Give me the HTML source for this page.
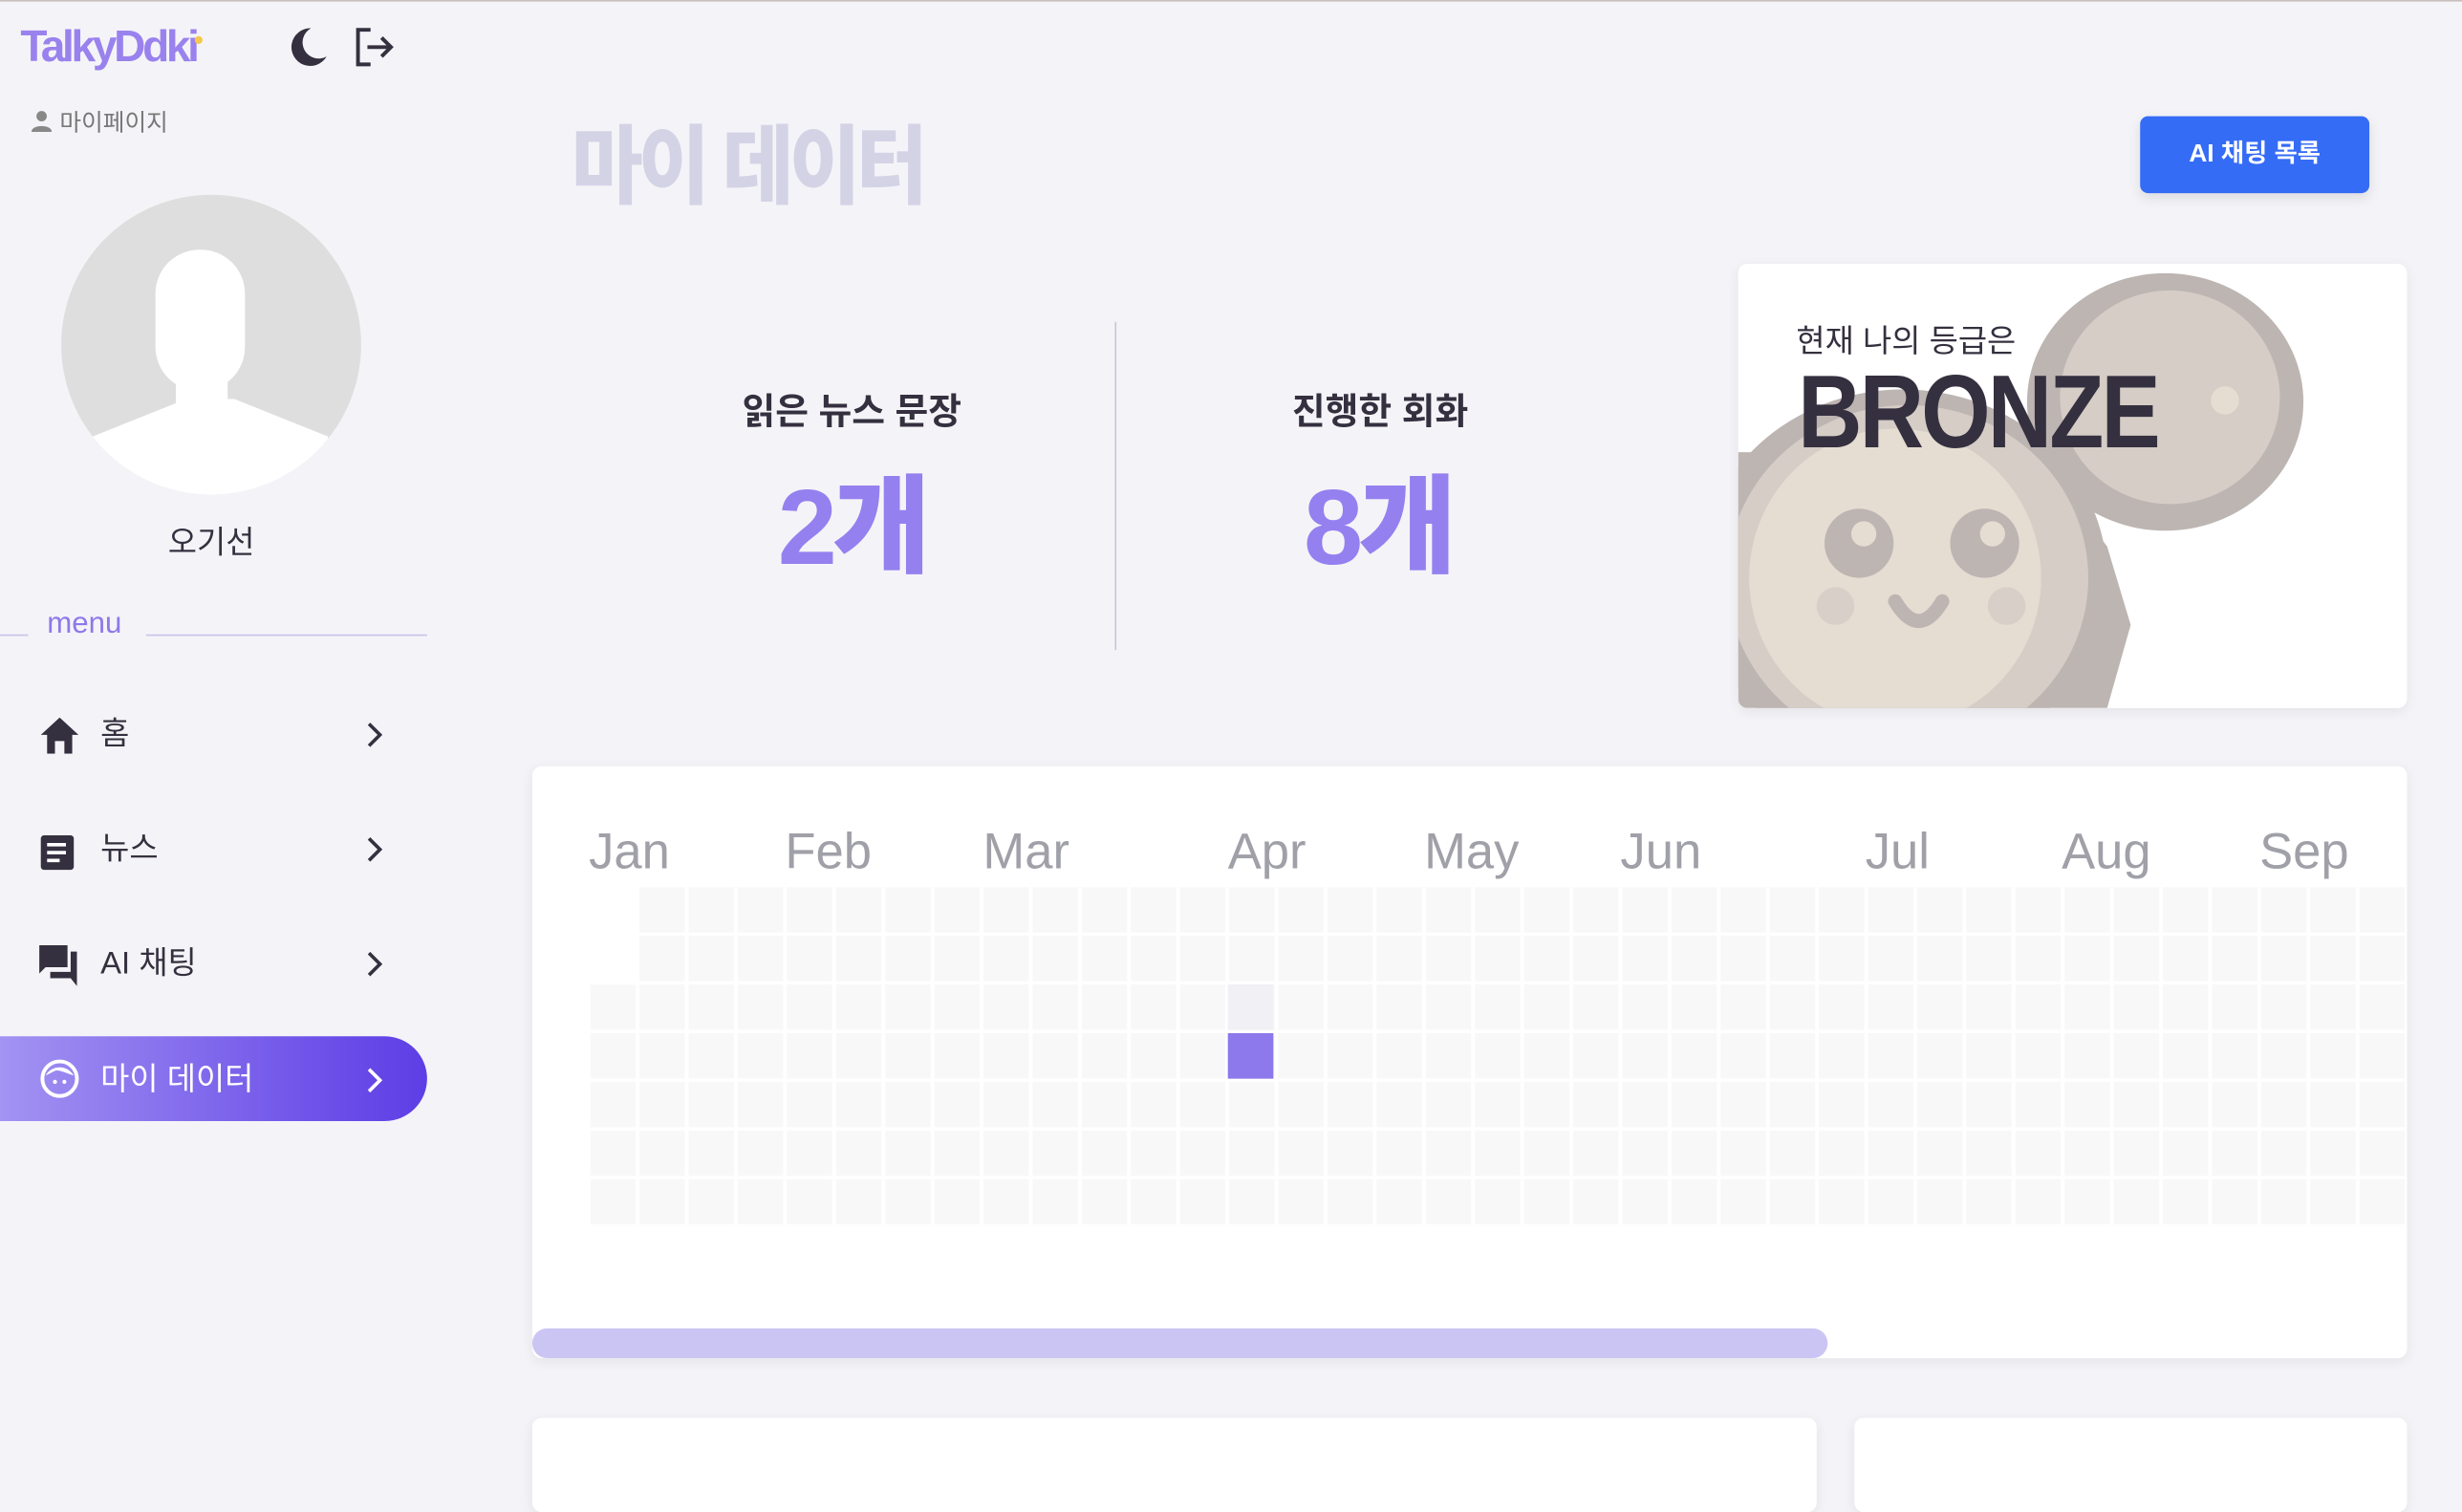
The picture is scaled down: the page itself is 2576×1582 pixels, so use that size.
<!DOCTYPE html>
<html><head><meta charset="utf-8">
<style>
html,body{margin:0;padding:0;width:2576px;height:1534px;overflow:hidden;background:#f4f4f8;}
#w{position:absolute;left:0;top:0;width:1568px;height:934px;transform:scale(1.642857);transform-origin:0 0;font-family:"Liberation Sans","Noto Sans CJK KR",sans-serif;color:#35303f;}
.a{position:absolute;}
.card{position:absolute;background:#fff;border-radius:6px;box-shadow:0 2px 8px rgba(0,0,0,0.07);}
.nav{position:absolute;left:0;width:272px;height:54px;font-size:20px;}
.nav .t{position:absolute;left:64px;top:11px;}
.nav svg.ic{position:absolute;left:25px;top:16px;}
.chev{position:absolute;left:232px;top:19px;}
.mon{position:absolute;top:524px;font-size:32px;color:#a0a0a8;}
</style></head><body><div id="w">
<div class="a" style="left:0;top:0;width:1568px;height:1px;background:#c9bfbd"></div>
<div class="a" style="left:13px;top:14px;font-size:28px;font-weight:bold;color:#9a82ee;letter-spacing:-2px">TalkyDdki</div>
<div class="a" style="left:124px;top:23px;width:5px;height:5px;border-radius:50%;background:#f5c84a"></div>
<svg class="a" style="left:184px;top:16px" width="26" height="28" viewBox="0 0 26 28"><path d="M14 2 A12 12 0 1 0 24 20 A10 10 0 0 1 14 2Z" fill="#35303f"/></svg>
<svg class="a" style="left:226px;top:17px" width="26" height="26" viewBox="0 0 26 26" fill="none" stroke="#35303f" stroke-width="2.4"><path d="M10 2H2V24H10"/><path d="M8 13H23M17 7L23 13L17 19"/></svg>
<svg class="a" style="left:20px;top:70px" width="13" height="14" viewBox="0 0 13 14"><circle cx="6.5" cy="4" r="3.3" fill="#888"/><path d="M0 14C0 9 13 9 13 14Z" fill="#888"/></svg>
<div class="a" style="left:38px;top:67px;font-size:15px;color:#777">마이페이지</div>
<div class="a" style="left:39px;top:124px;width:191px;height:191px;border-radius:50%;background:#dedede;overflow:hidden">
<div class="a" style="left:60px;top:35px;width:57px;height:90px;border-radius:28px;background:#fff"></div>
<div class="a" style="left:73px;top:105px;width:33px;height:30px;background:#fff"></div>
<div class="a" style="left:-5px;top:150px;width:200px;height:100px;background:#fff;clip-path:polygon(20% 0,80% 0,100% 30%,100% 100%,0 100%,0 30%)"></div>
<div class="a" style="left:20px;top:130px;width:150px;height:40px;background:#fff;clip-path:polygon(40% 0,60% 0,100% 60%,100% 100%,0 100%,0 60%)"></div>
</div>
<div class="a" style="left:107px;top:329px;font-size:20px">오기선</div>
<div class="a" style="left:0;top:404px;width:18px;height:1px;background:#c8c3e8"></div>
<div class="a" style="left:30px;top:387px;font-size:19px;color:#8f78ea">menu</div>
<div class="a" style="left:93px;top:404px;width:179px;height:1px;background:#c8c3e8"></div>

<div class="nav" style="top:440px"><svg class="ic" width="26" height="24" viewBox="0 0 26 24"><path d="M13 1L1 12H5V24H10V16H16V24H21V12H25Z" fill="#35303f"/></svg><div class="t">홈</div><svg class="chev" width="12" height="18" viewBox="0 0 12 18" fill="none" stroke="#35303f" stroke-width="2.2"><path d="M3 2L10 9L3 16"/></svg></div>
<div class="nav" style="top:513px"><svg class="ic" width="24" height="26" viewBox="0 0 24 26"><rect x="1" y="3" width="21" height="22" rx="2" fill="#35303f"/><path d="M5 9H17M5 14H17M5 19H13" stroke="#fff" stroke-width="2.2"/></svg><div class="t">뉴스</div><svg class="chev" width="12" height="18" viewBox="0 0 12 18" fill="none" stroke="#35303f" stroke-width="2.2"><path d="M3 2L10 9L3 16"/></svg></div>
<div class="nav" style="top:586px"><svg class="ic" width="26" height="26" viewBox="0 0 26 26"><path d="M0 0H18V14H4L0 18Z" fill="#35303f"/><path d="M7 17H20V4H24V26L20 21H7Z" fill="#35303f"/></svg><div class="t">AI 채팅</div><svg class="chev" width="12" height="18" viewBox="0 0 12 18" fill="none" stroke="#35303f" stroke-width="2.2"><path d="M3 2L10 9L3 16"/></svg></div>
<div class="nav" style="top:660px;border-radius:0 27px 27px 0;background:linear-gradient(90deg,#a393f2,#6a4de8 80%,#5d3ee6);color:#fff"><svg class="ic" style="top:14px" width="26" height="26" viewBox="0 0 26 26"><circle cx="13" cy="13" r="11" fill="none" stroke="#fff" stroke-width="2.4"/><path d="M4 11C8 4 18 4 22 11C16 9 12 7 10 8Z" fill="#fff"/><circle cx="10" cy="15" r="1.3" fill="#fff"/><circle cx="16" cy="15" r="1.3" fill="#fff"/></svg><div class="t">마이 데이터</div><svg class="chev" width="12" height="18" viewBox="0 0 12 18" fill="none" stroke="#fff" stroke-width="2.2"><path d="M3 2L10 9L3 16"/></svg></div>

<div class="a" style="left:364px;top:62px;font-size:52px;font-weight:900;color:#d4d3e6;letter-spacing:-3px;transform:scale(0.95,1.05);transform-origin:0 0">마이 데이터</div>
<div class="a" style="left:1363px;top:74px;width:146px;height:49px;border-radius:5px;background:#356cf6;color:#fff;font-size:16px;font-weight:bold;text-align:center;line-height:49px;box-shadow:0 3px 8px rgba(0,0,0,0.1)">AI 채팅 목록</div>

<div class="a" style="left:465px;top:243px;width:155px;text-align:center;font-size:23px;font-weight:bold">읽은 뉴스 문장</div>
<div class="a" style="left:450px;top:280px;width:185px;text-align:center;font-size:68px;font-weight:900;color:#9580ef;letter-spacing:-3px">2개</div>
<div class="a" style="left:710px;top:205px;width:1px;height:209px;background:#c8c8d4"></div>
<div class="a" style="left:795px;top:243px;width:168px;text-align:center;font-size:23px;font-weight:bold">진행한 회화</div>
<div class="a" style="left:785px;top:280px;width:185px;text-align:center;font-size:68px;font-weight:900;color:#9580ef;letter-spacing:-3px">8개</div>

<div class="card" style="left:1107px;top:168px;width:426px;height:283px;overflow:hidden">
<svg class="a" style="left:0;top:0" width="426" height="283" viewBox="0 0 426 283">
<ellipse cx="272" cy="88" rx="88" ry="82" fill="#bdb5b2"/>
<ellipse cx="275" cy="85" rx="70" ry="68" fill="#d5cdc6"/>
<path d="M190 120 L235 180 L250 230 L235 283 H0 V120 Z" fill="#bdb5b2"/>
<ellipse cx="105" cy="200" rx="130" ry="120" fill="#bdb5b2"/>
<ellipse cx="108" cy="200" rx="115" ry="110" fill="#d5cdc6"/>
<ellipse cx="100" cy="200" rx="93" ry="95" fill="#e5ddd2"/>
<circle cx="77" cy="178" r="22" fill="#bdb5b2"/><circle cx="80" cy="172" r="8" fill="#e5ddd2"/>
<circle cx="157" cy="178" r="22" fill="#bdb5b2"/><circle cx="162" cy="172" r="8" fill="#e5ddd2"/>
<circle cx="62" cy="218" r="12" fill="#d8cfc8"/><circle cx="171" cy="218" r="12" fill="#d8cfc8"/>
<path d="M100 215 Q115 240 130 215" stroke="#bdb5b2" stroke-width="9" fill="none" stroke-linecap="round"/>
<circle cx="310" cy="87" r="9" fill="#e5ddd2"/>
</svg>
<div class="a" style="left:37px;top:33px;font-size:20px">현재 나의 등급은</div>
<div class="a" style="left:38px;top:56px;font-size:66px;font-weight:900;color:#35303f;letter-spacing:-2px;transform:scaleX(0.86);transform-origin:0 0">BRONZE</div>
</div>

<div class="card" style="left:339px;top:488px;width:1194px;height:377px;overflow:hidden">
<div class="a" style="left:37px;top:77px;width:1160px;height:216px;background-color:#f8f8f9;background-image:linear-gradient(90deg,transparent 29px,#fff 29px),linear-gradient(transparent 29px,#fff 29px);background-size:31.3px 31px"></div>
<div class="a" style="left:37px;top:77px;width:31px;height:62px;background:#fff"></div>
<div class="a" style="left:443px;top:139px;width:29px;height:29px;background:#f0f0f5"></div>
<div class="a" style="left:443px;top:170px;width:29px;height:29px;background:#8d78ec"></div>
<div class="a" style="left:0;top:358px;width:825px;height:19px;border-radius:10px;background:#cbc5f3"></div>
</div>
<div class="mon" style="left:375px">Jan</div><div class="mon" style="left:500px">Feb</div><div class="mon" style="left:626px">Mar</div><div class="mon" style="left:782px">Apr</div><div class="mon" style="left:907px">May</div><div class="mon" style="left:1032px">Jun</div><div class="mon" style="left:1188px">Jul</div><div class="mon" style="left:1313px">Aug</div><div class="mon" style="left:1439px">Sep</div>

<div class="card" style="left:339px;top:903px;width:818px;height:60px"></div>
<div class="card" style="left:1181px;top:903px;width:352px;height:60px"></div>
</div></body></html>
